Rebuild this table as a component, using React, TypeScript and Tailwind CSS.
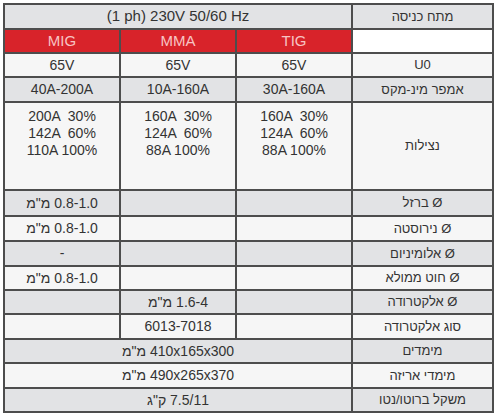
import { Fragment } from 'react';
import type { ReactNode } from 'react';

const GRAY = 'bg-[#e2e3e5]';
const WHITE = 'bg-[#f6f6f6]';

const Cell = ({ children, className = '' }: { children?: ReactNode; className?: string }) => (
  <div className={`flex items-center justify-center text-[14px] text-[#333] ${className}`}>{children}</div>
);

const Label = ({ children, gray }: { children: ReactNode; gray: boolean }) => (
  <div className={`flex items-center justify-center text-[13px] text-[#333] ${gray ? GRAY : WHITE}`}>{children}</div>
);

const simple = [
  { label: 'Ø ברזל', tig: '', mma: '', mig: '0.8-1.0 מ"מ', gray: true },
  { label: 'Ø נירוסטה', tig: '', mma: '', mig: '0.8-1.0 מ"מ', gray: false },
  { label: 'Ø אלומיניום', tig: '', mma: '', mig: '-', gray: true },
  { label: 'Ø חוט ממולא', tig: '', mma: '', mig: '0.8-1.0 מ"מ', gray: false },
  { label: 'Ø אלקטרודה', tig: '', mma: '1.6-4 מ"מ', mig: '', gray: true },
  { label: 'סוג אלקטרודה', tig: '', mma: '6013-7018', mig: '', gray: false },
];

const spans = [
  { label: 'מימדים', value: '410x165x300 מ"מ', gray: true },
  { label: 'מימדי אריזה', value: '490x265x370 מ"מ', gray: false },
  { label: 'משקל ברוטו/נטו', value: '7.5/11 ק"ג', gray: true },
];

// TIG, MMA, MIG (right to left)
const duty = [
  ['160A  30%', '124A  60%', '88A 100%'],
  ['160A  30%', '124A  60%', '88A 100%'],
  ['200A  30%', '142A  60%', '110A 100%'],
];

export default function App() {
  return (
    <div className="min-h-screen bg-white p-[3px]" style={{ fontFamily: '"Liberation Sans", "DejaVu Sans", Arial, sans-serif' }}>
      <div
        dir="rtl"
        className="grid w-[491px] grid-cols-[139px_114px_114px_114px] grid-rows-[23px_22px_22px_23px_86px_24px_23px_23px_22px_22px_23px_22px_23px_22px] gap-[2px] bg-[#4d4d4d] p-[2px]"
      >
        {/* input voltage */}
        <Label gray>מתח כניסה</Label>
        <Cell className={`col-span-3 text-[15px] ${GRAY}`}>
          <span dir="ltr">(1 ph) 230V 50/60 Hz</span>
        </Cell>

        {/* process header */}
        <div className="bg-white" />
        {['TIG', 'MMA', 'MIG'].map((p) => (
          <div key={p} className="flex items-center justify-center bg-[#d8232a] text-[15px] text-[#f7c3c3]">
            {p}
          </div>
        ))}

        <Label gray={false}>U0</Label>
        {['65V', '65V', '65V'].map((v, i) => (
          <Cell key={i} className={WHITE}>{v}</Cell>
        ))}

        <Label gray>אמפר מינ-מקס</Label>
        {['30A-160A', '10A-160A', '40A-200A'].map((v, i) => (
          <Cell key={i} className={GRAY}>{v}</Cell>
        ))}

        <Label gray={false}>נצילות</Label>
        {duty.map((lines, i) => (
          <div key={i} dir="ltr" className={`flex flex-col items-center pt-[5px] text-[14px] leading-[17px] text-[#333] ${WHITE}`}>
            {lines.map((l) => (
              <span key={l} className="whitespace-pre">{l}</span>
            ))}
          </div>
        ))}

        {simple.map((r) => (
          <Fragment key={r.label}>
            <Label gray={r.gray}>{r.label}</Label>
            <Cell className={r.gray ? GRAY : WHITE}>{r.tig}</Cell>
            <Cell className={r.gray ? GRAY : WHITE}>{r.mma}</Cell>
            <Cell className={r.gray ? GRAY : WHITE}>{r.mig}</Cell>
          </Fragment>
        ))}

        {spans.map((r) => (
          <Fragment key={r.label}>
            <Label gray={r.gray}>{r.label}</Label>
            <Cell className={`col-span-3 ${r.gray ? GRAY : WHITE}`}>{r.value}</Cell>
          </Fragment>
        ))}
      </div>
    </div>
  );
}
